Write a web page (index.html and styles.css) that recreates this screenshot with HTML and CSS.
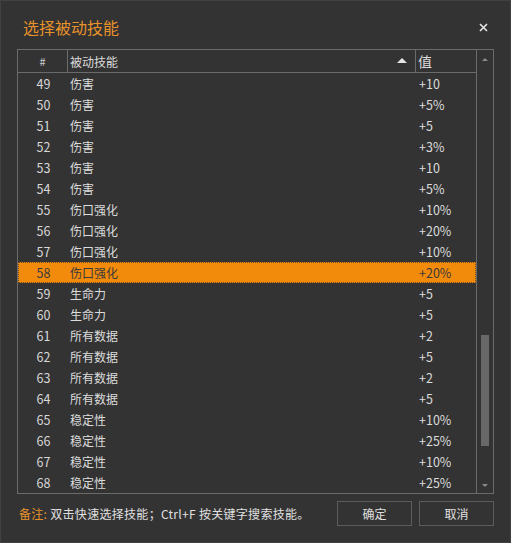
FILE: index.html
```html
<!DOCTYPE html>
<html lang="zh">
<head>
<meta charset="utf-8">
<link rel="stylesheet" href="styles.css">
</head>
<body>
<div class="dialog">
  <div class="titlebar">
    <span class="title">选择被动技能</span>
    <svg class="close" width="9" height="9" viewBox="0 0 9 9"><path d="M1 1L8 8M8 1L1 8" stroke="#e6e6e6" stroke-width="1.6"/></svg>
  </div>
  <div class="grid">
    <div class="table">
      <div class="head">
        <div class="c-num">#</div>
        <div class="c-name">被动技能<span class="sort"></span></div>
        <div class="c-val hval">值</div>
      </div>
      <div class="body">
        <div class="row"><div class="c-num">49</div><div class="c-name">伤害</div><div class="c-val">+10</div></div>
        <div class="row"><div class="c-num">50</div><div class="c-name">伤害</div><div class="c-val">+5%</div></div>
        <div class="row"><div class="c-num">51</div><div class="c-name">伤害</div><div class="c-val">+5</div></div>
        <div class="row"><div class="c-num">52</div><div class="c-name">伤害</div><div class="c-val">+3%</div></div>
        <div class="row"><div class="c-num">53</div><div class="c-name">伤害</div><div class="c-val">+10</div></div>
        <div class="row"><div class="c-num">54</div><div class="c-name">伤害</div><div class="c-val">+5%</div></div>
        <div class="row"><div class="c-num">55</div><div class="c-name">伤口强化</div><div class="c-val">+10%</div></div>
        <div class="row"><div class="c-num">56</div><div class="c-name">伤口强化</div><div class="c-val">+20%</div></div>
        <div class="row"><div class="c-num">57</div><div class="c-name">伤口强化</div><div class="c-val">+10%</div></div>
        <div class="row selected"><div class="c-num">58</div><div class="c-name">伤口强化</div><div class="c-val">+20%</div></div>
        <div class="row"><div class="c-num">59</div><div class="c-name">生命力</div><div class="c-val">+5</div></div>
        <div class="row"><div class="c-num">60</div><div class="c-name">生命力</div><div class="c-val">+5</div></div>
        <div class="row"><div class="c-num">61</div><div class="c-name">所有数据</div><div class="c-val">+2</div></div>
        <div class="row"><div class="c-num">62</div><div class="c-name">所有数据</div><div class="c-val">+5</div></div>
        <div class="row"><div class="c-num">63</div><div class="c-name">所有数据</div><div class="c-val">+2</div></div>
        <div class="row"><div class="c-num">64</div><div class="c-name">所有数据</div><div class="c-val">+5</div></div>
        <div class="row"><div class="c-num">65</div><div class="c-name">稳定性</div><div class="c-val">+10%</div></div>
        <div class="row"><div class="c-num">66</div><div class="c-name">稳定性</div><div class="c-val">+25%</div></div>
        <div class="row"><div class="c-num">67</div><div class="c-name">稳定性</div><div class="c-val">+10%</div></div>
        <div class="row"><div class="c-num">68</div><div class="c-name">稳定性</div><div class="c-val">+25%</div></div>
      </div>
    </div>
    <div class="scrollbar">
      <span class="arrow up"></span>
      <div class="track"><div class="thumb"></div></div>
      <span class="arrow down"></span>
    </div>
  </div>
  <div class="footer">
    <div class="note"><span class="note-label">备注:</span> 双击快速选择技能；Ctrl+F 按关键字搜索技能。</div>
    <div class="btn">确定</div>
    <div class="btn">取消</div>
  </div>
</div>
</body>
</html>
```

FILE: styles.css
```css
* { box-sizing: border-box; }
html, body { margin: 0; padding: 0; background: #333333; }
body {
  font-family: "Noto Sans CJK SC", "Noto Sans", sans-serif;
  font-size: 12px;
  color: #dcdcdc;
}
.dialog {
  width: 511px;
  height: 543px;
  background: #333333;
  border: 1px solid #414141;
  display: flex;
  flex-direction: column;
}
.titlebar {
  height: 48px;
  display: flex;
  align-items: center;
  justify-content: space-between;
  padding: 0 22px 0 22px;
}
.title {
  color: #e8922b;
  font-size: 16px;
  margin-top: 4px;
}
.close {
  display: block;
  margin-top: 4px;
}
.grid {
  margin-left: 16px;
  width: 477px;
  height: 445px;
  border: 1px solid #6b6b6b;
  display: flex;
}
.table {
  width: 459px;
  border-right: 1px solid #6b6b6b;
  display: flex;
  flex-direction: column;
}
.head {
  height: 23px;
  display: flex;
  border-bottom: 1px solid #6b6b6b;
}
.head > div {
  height: 22px;
  display: flex;
  align-items: center;
}
.head .c-num { border-right: 1px solid #6b6b6b; justify-content: center; font-size: 11px; color: #cfcfcf; }
.head .c-name { border-right: 1px solid #6b6b6b; position: relative; }
.c-num { width: 50px; text-align: center; justify-content: center; }
.c-name { width: 348px; padding-left: 2px; }
.c-val { flex: 1; padding-left: 2px; }
.hval { font-size: 14px; }
.sort {
  position: absolute;
  right: 8px;
  top: 8px;
  width: 0; height: 0;
  border-left: 5px solid transparent;
  border-right: 5px solid transparent;
  border-bottom: 5px solid #e6e6e6;
}
.row {
  height: 21px;
  display: flex;
  align-items: center;
  border: 1px solid transparent;
}
.row .c-num { width: 49px; display: flex; color: #d8d8d8; font-size: 12.5px; }
.row .c-name { width: 349px; }
.row .c-val { font-size: 12.5px; }
.row.selected {
  background: #f28a0c;
  color: #3a3a3a;
  border: 1px dotted #6a4a20;
}
.row.selected .c-num { color: #3a3a3a; }
.scrollbar {
  flex: 1;
  display: flex;
  flex-direction: column;
  align-items: center;
  padding: 8px 0 6px;
}
.arrow {
  width: 0; height: 0;
  border-left: 3px solid transparent;
  border-right: 3px solid transparent;
}
.arrow.up { border-bottom: 3px solid #8a8a8a; }
.arrow.down { border-top: 3px solid #8a8a8a; }
.track {
  flex: 1;
  width: 100%;
  display: flex;
  flex-direction: column;
  justify-content: flex-end;
  align-items: center;
  padding-bottom: 38px;
}
.thumb {
  width: 8px;
  height: 111px;
  background: #686868;
}
.footer {
  display: flex;
  align-items: center;
  padding: 7px 0 0 18px;
}
.note { flex: 1; color: #e0e0e0; letter-spacing: 0.3px; }
.note-label { color: #e8922b; }
.btn {
  width: 75px;
  height: 25px;
  border: 1px solid #5c5c5c;
  display: flex;
  align-items: center;
  justify-content: center;
  margin-right: 7px;
  color: #e0e0e0;
}
.btn:last-child { margin-right: 16px; }
```
